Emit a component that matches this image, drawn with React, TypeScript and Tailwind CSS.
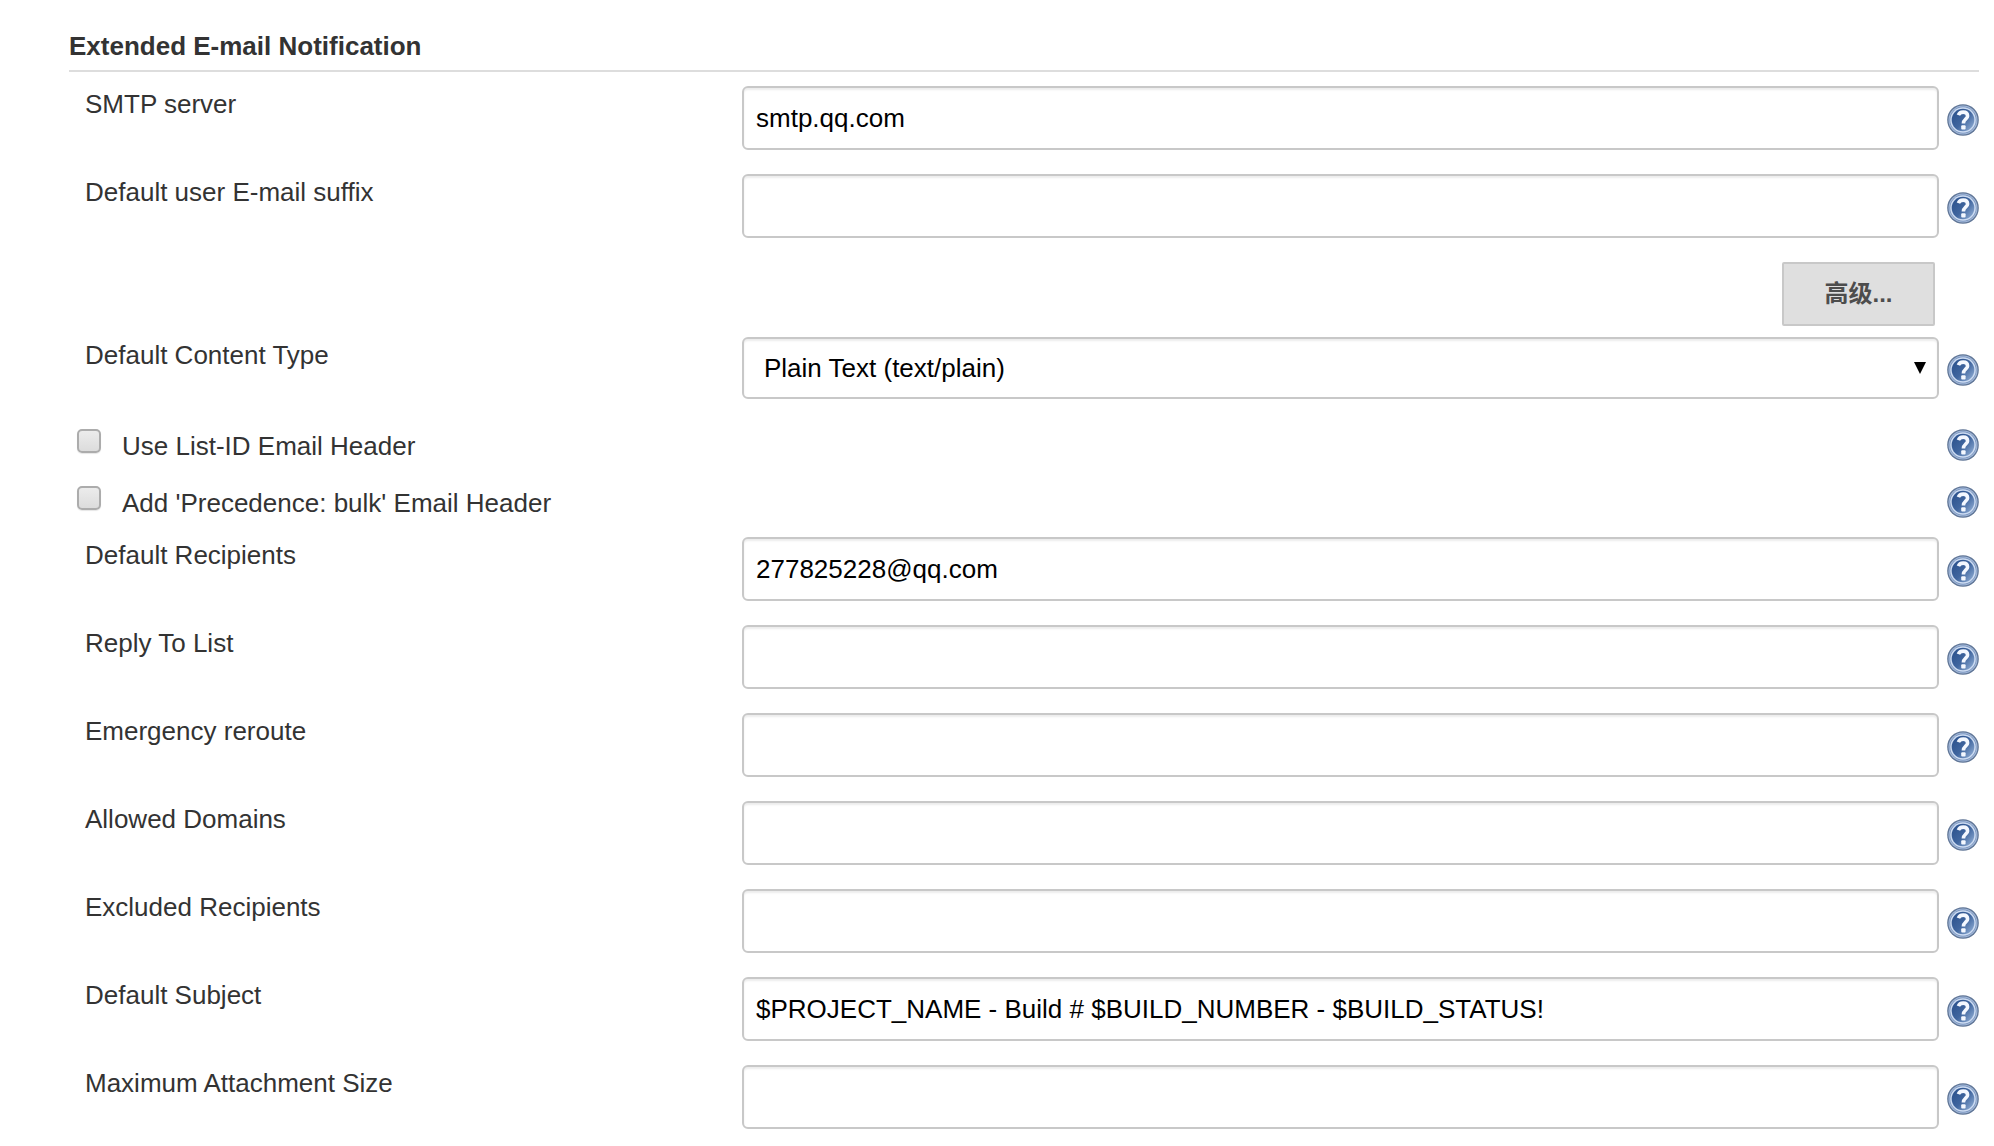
import React from "react";

function HelpIcon() {
  return (
    <svg width="32" height="32" viewBox="0 0 32 32" className="block shrink-0">
      <defs>
        <linearGradient id="helpDisc" x1="0.1" y1="0.2" x2="0.9" y2="0.9">
          <stop offset="0" stopColor="#2f5590" />
          <stop offset="0.5" stopColor="#40669f" />
          <stop offset="1" stopColor="#88a6cf" />
        </linearGradient>
      </defs>
      <circle cx="16" cy="16" r="15.8" fill="#5f7596" />
      <circle cx="16" cy="16" r="14.5" fill="#a3b9da" />
      <circle cx="16" cy="16" r="13.4" fill="#7590ba" />
      <circle cx="16" cy="16" r="12.8" fill="#cddcf2" />
      <circle cx="16" cy="16" r="11.3" fill="url(#helpDisc)" />
      <path
        d="M11.4 11.2C12.2 8.9 14 8.1 16.2 8.1C19 8.1 20.6 9.6 20.6 11.9C20.6 14.9 16.4 15.4 16.4 19.4"
        fill="none"
        stroke="#f4f8ff"
        strokeWidth="3.6"
      />
      <rect x="14.2" y="21.2" width="4.4" height="4.4" rx="1" fill="#f4f8ff" />
    </svg>
  );
}

const fieldBox =
  "w-[1197px] shrink-0 rounded-[6px] border-2 border-[#c8c8c8] bg-white text-[26px] leading-[30px] text-black shadow-[inset_0_2px_2px_rgba(0,0,0,0.075)] outline-none";

function Label({ children }: { children: React.ReactNode }) {
  return <label className="w-[673px] shrink-0 pt-[3px] pl-4">{children}</label>;
}

function TextRow({ label, value = "" }: { label: string; value?: string }) {
  return (
    <div className="flex h-[88px] items-start">
      <Label>{label}</Label>
      <input type="text" defaultValue={value} className={`${fieldBox} h-16 px-3`} />
      <div className="pt-[18px] pl-2">
        <HelpIcon />
      </div>
    </div>
  );
}

function CheckRow({ label }: { label: string }) {
  return (
    <div className="flex h-[57px] items-start justify-between">
      <label className="flex items-start">
        <span className="ml-2 h-6 w-6 rounded-[5px] border-2 border-[#acacac] bg-linear-to-b from-[#ececec] to-[#dcdcdc] shadow-[0_1px_1px_rgba(0,0,0,0.1)]" />
        <span className="ml-[21px] pt-[2px]">{label}</span>
      </label>
      <HelpIcon />
    </div>
  );
}

export default function App() {
  return (
    <main className="h-[1146px] w-[1994px] overflow-hidden bg-white pr-[15px] pl-[69px] font-['Liberation_Sans','Noto_Sans_CJK_SC',sans-serif] text-[26px] leading-[30px] text-[#333]">
      <h2 className="mb-3.5 h-[72px] border-b-2 border-[#ddd] pt-[31px] text-[26px] font-bold">
        Extended E-mail Notification
      </h2>
      <TextRow label="SMTP server" value="smtp.qq.com" />
      <TextRow label="Default user E-mail suffix" />
      <div className="flex h-[75px] items-start justify-end pr-11">
        <button className="h-16 w-[153px] rounded-[2px] border-2 border-[#c8c8c8] bg-[#dfdfdf] text-2xl font-bold text-[#4d4d4d]">
          高级...
        </button>
      </div>
      <div className="flex h-[92px] items-start">
        <Label>Default Content Type</Label>
        <div className={`${fieldBox} flex h-[62px] items-center justify-between pr-[11px] pl-5`}>
          <span className="pb-px">Plain Text (text/plain)</span>
          <svg width="12" height="12" viewBox="0 0 12 12">
            <path d="M0 0H12L6 12Z" fill="#000" />
          </svg>
        </div>
        <div className="pt-[17px] pl-2">
          <HelpIcon />
        </div>
      </div>
      <CheckRow label="Use List-ID Email Header" />
      <div className="h-[51px]">
        <CheckRow label="Add 'Precedence: bulk' Email Header" />
      </div>
      <TextRow label="Default Recipients" value="277825228@qq.com" />
      <TextRow label="Reply To List" />
      <TextRow label="Emergency reroute" />
      <TextRow label="Allowed Domains" />
      <TextRow label="Excluded Recipients" />
      <TextRow label="Default Subject" value="$PROJECT_NAME - Build # $BUILD_NUMBER - $BUILD_STATUS!" />
      <TextRow label="Maximum Attachment Size" />
    </main>
  );
}
